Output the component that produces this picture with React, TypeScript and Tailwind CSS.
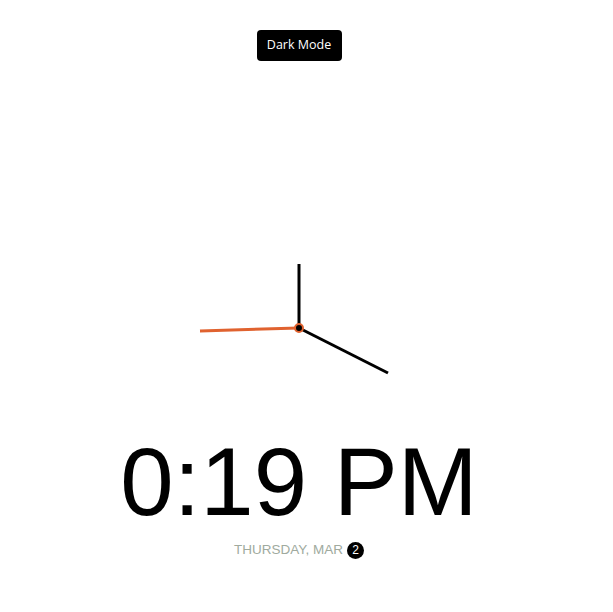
import React from "react";

const hands = {
  hour: { x2: 100, y2: 36 },
  minute: { x2: 189, y2: 145 },
  second: { x2: 1, y2: 103 },
};

export default function App() {
  return (
    <div className="min-h-screen bg-white flex flex-col items-center pr-[15px]">
      <button
        type="button"
        className="mt-[30px] h-[31px] w-[85px] rounded-[4px] bg-black text-white text-[12.5px] font-['Open_Sans',sans-serif]"
      >
        Dark Mode
      </button>
      <svg width="200" height="200" viewBox="0 0 200 200" className="mt-[167px]">
        <line x1="100" y1="100" x2={hands.hour.x2} y2={hands.hour.y2} stroke="#000" strokeWidth="3" />
        <line x1="100" y1="100" x2={hands.minute.x2} y2={hands.minute.y2} stroke="#000" strokeWidth="3" />
        <line x1="100" y1="100" x2={hands.second.x2} y2={hands.second.y2} stroke="#e0622f" strokeWidth="3" />
        <circle cx="100" cy="100" r="4" fill="#000" stroke="#e0622f" strokeWidth="2" />
      </svg>
      <div className="mt-[6px] text-[96px] leading-none text-black font-['Liberation_Sans',Arial,sans-serif]">
        0:19 PM
      </div>
      <div className="mt-[10px] flex items-center gap-[4px] text-[13.5px] text-[#a0aa9e] font-['Liberation_Sans',Arial,sans-serif]">
        <span>THURSDAY, MAR</span>
        <span className="w-[17px] h-[17px] rounded-full bg-black text-white flex items-center justify-center text-[12px]">
          2
        </span>
      </div>
    </div>
  );
}
